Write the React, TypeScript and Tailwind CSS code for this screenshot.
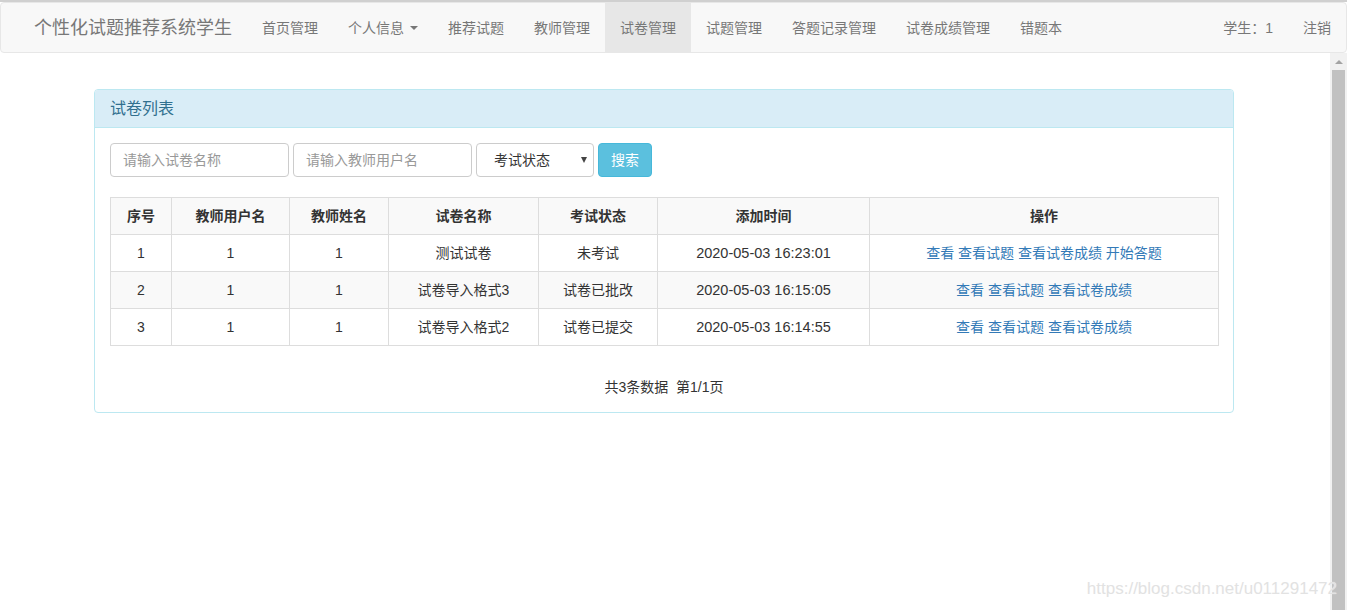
const NAV = ['首页管理', '个人信息', '推荐试题', '教师管理', '试卷管理', '试题管理', '答题记录管理', '试卷成绩管理', '错题本']

const COLS = [61, 118, 99, 150, 119, 212, 349]
const HEADERS = ['序号', '教师用户名', '教师姓名', '试卷名称', '考试状态', '添加时间', '操作']

const ROWS = [
  { no: 1, user: '1', name: '1', paper: '测试试卷', status: '未考试', time: '2020-05-03 16:23:01', ops: ['查看', '查看试题', '查看试卷成绩', '开始答题'] },
  { no: 2, user: '1', name: '1', paper: '试卷导入格式3', status: '试卷已批改', time: '2020-05-03 16:15:05', ops: ['查看', '查看试题', '查看试卷成绩'] },
  { no: 3, user: '1', name: '1', paper: '试卷导入格式2', status: '试卷已提交', time: '2020-05-03 16:14:55', ops: ['查看', '查看试题', '查看试卷成绩'] },
]

export default function App() {
  return (
    <div className="relative h-[610px] overflow-hidden bg-white font-['Liberation_Sans','Noto_Sans_CJK_SC',sans-serif] text-[14px] leading-[20px] text-[#333]">
      {/* top frame line */}
      <div className="h-[2px] bg-[#d0d0d0]" />

      {/* Navbar */}
      <div className="flex h-[51px] items-stretch rounded-[4px] border border-[#e7e7e7] bg-[#f8f8f8]">
        <div className="flex w-[246px] shrink-0 items-center overflow-hidden whitespace-nowrap pl-[33px] text-[18px] text-[#777]">个性化试题推荐系统学生</div>
        <div className="flex items-stretch">
          {NAV.map((n) => (
            <div
              key={n}
              className={`flex items-center px-[15px] text-[#777] ${n === '试卷管理' ? 'bg-[#e7e7e7] text-[#555]' : ''}`}
            >
              {n}
              {n === '个人信息' && (
                <span className="ml-[6px] inline-block h-0 w-0 border-x-[4px] border-t-[4px] border-x-transparent border-t-[#777]" />
              )}
            </div>
          ))}
        </div>
        <div className="ml-auto flex items-stretch">
          <div className="flex items-center px-[15px] text-[#777]">学生：1</div>
          <div className="flex items-center px-[15px] text-[#777]">注销</div>
        </div>
      </div>

      <div className="flex h-[557px]">
        {/* Main */}
        <div className="flex-1 pt-[36px]">
          <div className="mx-auto w-[1140px] -translate-x-px rounded-[4px] border border-[#bce8f1] bg-white">
            <div className="rounded-t-[3px] border-b border-[#bce8f1] bg-[#d9edf7] px-[15px] py-[10px] text-[16px] leading-[17px] text-[#31708f]">
              试卷列表
            </div>
            <div className="px-[15px] pb-[15px] pt-[15px]">
              {/* search form */}
              <div className="flex gap-[4px]">
                <div className="flex h-[34px] w-[179px] items-center rounded-[4px] border border-[#ccc] px-[12px] text-[#999]">请输入试卷名称</div>
                <div className="flex h-[34px] w-[179px] items-center rounded-[4px] border border-[#ccc] px-[12px] text-[#999]">请输入教师用户名</div>
                <div className="flex h-[34px] w-[118px] items-center justify-between rounded-[4px] border border-[#ccc] pl-[17px] pr-[6px] text-[#333]">
                  <span>考试状态</span>
                  <span className="inline-block h-0 w-0 border-x-[3px] border-t-[6px] border-x-transparent border-t-[#444]" />
                </div>
                <div className="flex h-[34px] w-[54px] items-center justify-center rounded-[4px] border border-[#46b8da] bg-[#5bc0de] text-white">搜索</div>
              </div>

              {/* table */}
              <table className="mt-[20px] w-[1108px] table-fixed border-collapse text-center">
                <colgroup>
                  {COLS.map((w, i) => (
                    <col key={i} style={{ width: w }} />
                  ))}
                </colgroup>
                <tbody>
                  <tr className="h-[37px] bg-[#f9f9f9]">
                    {HEADERS.map((h) => (
                      <td key={h} className="border border-[#ddd] px-[8px] font-bold">{h}</td>
                    ))}
                  </tr>
                  {ROWS.map((r, i) => (
                    <tr key={r.no} className={`h-[37px] ${i % 2 === 1 ? 'bg-[#f9f9f9]' : 'bg-white'}`}>
                      <td className="border border-[#ddd] px-[8px]">{r.no}</td>
                      <td className="border border-[#ddd] px-[8px]">{r.user}</td>
                      <td className="border border-[#ddd] px-[8px]">{r.name}</td>
                      <td className="border border-[#ddd] px-[8px]">{r.paper}</td>
                      <td className="border border-[#ddd] px-[8px]">{r.status}</td>
                      <td className="border border-[#ddd] px-[8px] text-[14.5px]">{r.time}</td>
                      <td className="border border-[#ddd] px-[8px]">
                        {r.ops.map((o, j) => (
                          <span key={o}>
                            {j > 0 && ' '}
                            <a className="text-[#337ab7]">{o}</a>
                          </span>
                        ))}
                      </td>
                    </tr>
                  ))}
                </tbody>
              </table>

              <div className="mt-[20px] pt-[11px] text-center whitespace-pre">共3条数据  第1/1页</div>
            </div>
          </div>
        </div>

        {/* Scrollbar */}
        <div className="flex w-[17px] flex-col bg-[#f1f1f1]">
          <div className="flex h-[17px] items-center justify-center">
            <span className="inline-block h-0 w-0 border-x-[4px] border-b-[4px] border-x-transparent border-b-[#a3a3a3]" />
          </div>
          <div className="mx-[2px] flex-1 bg-[#c1c1c1]" />
        </div>
      </div>

      {/* watermark */}
      <div className="absolute bottom-[11px] right-[10px] font-['Liberation_Sans',sans-serif] text-[17px] text-[#e2e2e2] [text-shadow:0_0_1px_rgba(255,255,255,0.9)]">
        https://blog.csdn.net/u011291472
      </div>
    </div>
  )
}
